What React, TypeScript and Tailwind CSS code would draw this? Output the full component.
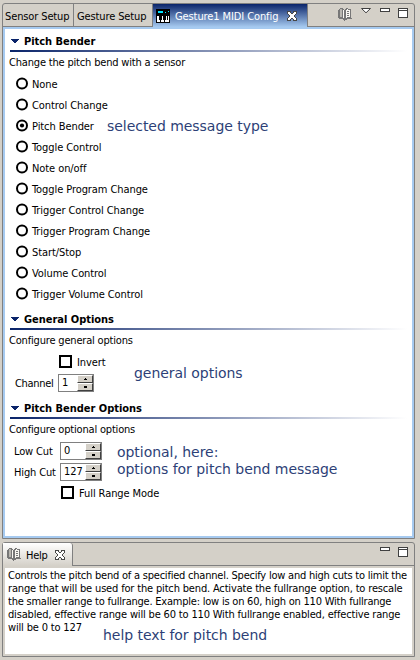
import type { ReactNode } from 'react';

const messageTypes = [
  'None',
  'Control Change',
  'Pitch Bender',
  'Toggle Control',
  'Note on/off',
  'Toggle Program Change',
  'Trigger Control Change',
  'Trigger Program Change',
  'Start/Stop',
  'Volume Control',
  'Trigger Volume Control',
];

function Radio({ label, checked }: { label: string; checked: boolean }) {
  return (
    <div className="flex h-[21px] items-center pl-[11px]">
      <svg width="12" height="13" viewBox="0 0 12 13" className="shrink-0">
        <circle cx="6" cy="6.5" r="5" fill="#fff" stroke="#000" strokeWidth="2" />
        {checked && <circle cx="6" cy="6.5" r="2.1" fill="#000" />}
      </svg>
      <span className="pt-px pl-[4px] tracking-[-0.08px]">{label}</span>
    </div>
  );
}

function Check({ label }: { label: string }) {
  return (
    <div className="flex h-[21px] items-center">
      <span className="size-[13px] border-2 border-black bg-white" />
      <span className="pt-px pl-[5px] tracking-[-0.08px]">{label}</span>
    </div>
  );
}

function Heading({ children }: { children: ReactNode }) {
  return (
    <div className="mx-[5px] flex h-[21px] flex-col">
      <div className="flex h-[19px] items-center pt-px pl-[1px]">
        <svg width="9" height="5" viewBox="0 0 9 5" shapeRendering="crispEdges">
          <path d="M0 0H8V1H7V2H6V3H5V4H3V3H2V2H1V1H0Z" fill="#0a246a" />
        </svg>
        <span className="pl-[4px] font-bold tracking-[-0.03px]">{children}</span>
      </div>
      <div className="h-[2px] bg-linear-to-r/srgb from-[#0a246a] to-white" />
    </div>
  );
}

function Description({ children }: { children: ReactNode }) {
  return <div className="pt-[4px] pl-[4px] tracking-[-0.18px]">{children}</div>;
}

function Spinner({ value }: { value: string }) {
  return (
    <div className="flex h-[18px] border border-[#808080] bg-white">
      <span className="flex-1 pl-[3px] leading-[15px]">{value}</span>
      <div className="flex w-[16px] flex-col">
        {['M0 2H1V1H2V0H3V1H4V2H5V3H0Z', 'M0 0H5V1H4V2H3V3H2V2H1V1H0Z'].map((d) => (
          <div
            key={d}
            className="flex h-[8px] items-center justify-center border border-t-white border-r-[#404040] border-b-[#404040] border-l-white bg-[#d4d0c8]"
          >
            <svg width="5" height="3" viewBox="-1 0 7 4" shapeRendering="crispEdges">
              <path d={d} />
            </svg>
          </div>
        ))}
      </div>
    </div>
  );
}

function Book() {
  return (
    <svg width="15" height="13" viewBox="0 0 15 13" shapeRendering="crispEdges" className="shrink-0">
      <path d="M1 1H2V0H5V1H6V2H7V1H8V0H10V1H13V10H14V11H9V12H7V13H6V12H5V11H1V10H0V2H1Z" fill="#777" />
      <path d="M2 1H4V9H2Z" fill="#b8b6b0" />
      <path d="M5 2H6V10H5ZM8 2H9V1H10V2H12V9H9V10H8Z" fill="#f8f7f2" />
      <path d="M9 3.5H11M9 5.5H11M9 7.5H11" stroke="#777" />
    </svg>
  );
}

function CloseIcon() {
  return (
    <svg width="10" height="10" viewBox="-0.5 -0.5 10 10" shapeRendering="crispEdges" className="shrink-0">
      <path
        d="M0 0H3V1L4 2H5L6 1V0H9V2L7 4V5L9 7V9H6V8L5 7H4L3 8V9H0V7L2 5V4L0 2Z"
        fill="#fff"
        stroke="#484848"
      />
    </svg>
  );
}

function Minimize() {
  return <span className="h-[4px] w-[10px] border border-[#404040] bg-white" />;
}

function Maximize() {
  return (
    <span className="flex h-[10px] w-[10px] flex-col border border-[#404040] bg-white">
      <span className="mt-px h-px bg-[#404040]" />
    </span>
  );
}

function Note({ className, children }: { className: string; children: ReactNode }) {
  return (
    <div
      className={`absolute font-['Verdana','DejaVu_Sans',sans-serif] text-[14px] leading-[17px] tracking-[-0.04px] whitespace-nowrap text-[#2d3f77] [font-stretch:normal] ${className}`}
    >
      {children}
    </div>
  );
}

export default function App() {
  return (
    <div className="relative h-[660px] w-[420px] overflow-hidden bg-[#d4d0c8] pt-[3px] pl-[2px] font-['Tahoma','DejaVu_Sans_Condensed','DejaVu_Sans',sans-serif] text-[11px] leading-[13px] whitespace-nowrap text-black [font-stretch:condensed]">
      <section className="flex h-[536px] w-[413px] flex-col rounded-t-[3px] border border-[#808080]">
        <header className="flex h-[23px] shrink-0">
          <div className="flex w-[71px] items-center border-r border-b border-[#808080] pt-[2px] pl-[2px] tracking-[-0.12px]">Sensor Setup</div>
          <div className="flex w-[78px] items-center border-b border-[#808080] pt-[2px] pl-[3px] tracking-[-0.12px]">Gesture Setup</div>
          <div className="flex w-[156px] items-center border-x border-[#808080] bg-linear-to-b/srgb from-[#0a246a] to-[#a6caf0] pl-[3px] text-white">
            <svg width="14" height="14" viewBox="0 0 14 14" shapeRendering="crispEdges" className="shrink-0">
              <path d="M0 0H14V14H0Z" />
              <path d="M2 2H7V4H2ZM12 2H13V3H12ZM9 3H10V4H9Z" fill="#00e5ff" />
              <path d="M1 7H3V11H4V13H1ZM5 11H6V7H7V11H8V13H5ZM9 11H10V7H13V13H9Z" fill="#fff" />
              <path d="M11 7H12V11H11Z" />
            </svg>
            <span className="w-[117px] pt-px pl-[5px] tracking-[-0.1px]">Gesture1 MIDI Config</span>
            <CloseIcon />
          </div>
          <div className="flex flex-1 items-start border-b border-[#808080] pt-[4px] pl-[30px]">
            <Book />
            <svg width="10" height="6" viewBox="0 0 10 6" className="ml-[8px]">
              <path d="M.5 .5H9.5L5 4.8Z" fill="#fff" stroke="#404040" />
            </svg>
            <span className="ml-[9px] flex"><Minimize /></span>
            <span className="ml-[8px] flex"><Maximize /></span>
          </div>
        </header>
        <div className="flex-1 border-2 border-[#a6caf0] bg-white pt-[2px]">
          <Heading>Pitch Bender</Heading>
          <Description>Change the pitch bend with a sensor</Description>
          <div className="pt-[4px]">
            {messageTypes.map((label) => (
              <Radio key={label} label={label} checked={label === 'Pitch Bender'} />
            ))}
          </div>
          <div className="pt-[5px]"><Heading>General Options</Heading></div>
          <Description>Configure general options</Description>
          <div className="pt-[4px] pl-[54px]"><Check label="Invert" /></div>
          <div className="flex h-[21px] items-center pt-px pl-[10px]">
            <span className="w-[43px] tracking-[-0.3px]">Channel</span>
            <div className="w-[36px]"><Spinner value="1" /></div>
          </div>
          <div className="pt-[5px]"><Heading>Pitch Bender Options</Heading></div>
          <Description>Configure optional options</Description>
          <div className="pt-[4px]">
            {[['Low Cut', '0'], ['High Cut', '127']].map(([name, value]) => (
              <div key={name} className="flex h-[21px] items-center pt-px pl-[9px]">
                <span className="w-[46px] tracking-[-0.15px]">{name}</span>
                <div className="w-[42px]"><Spinner value={value} /></div>
              </div>
            ))}
          </div>
          <div className="pl-[56px]"><Check label="Full Range Mode" /></div>
        </div>
      </section>

      <section className="mt-[3px] flex h-[115px] w-[413px] flex-col rounded-t-[3px] border border-[#808080]">
        <header className="flex h-[23px] shrink-0">
          <div className="flex w-[70px] items-center rounded-tr-[3px] border-r border-[#808080] bg-linear-to-b/srgb from-white to-[#d4d0c8] pl-[4px]">
            <Book />
            <span className="w-[33px] pt-[2px] pl-[4px] tracking-[-0.3px]">Help</span>
            <CloseIcon />
          </div>
          <div className="flex flex-1 items-start border-b border-[#808080] pt-[4px] pl-[307px]">
            <Minimize />
            <span className="ml-[8px] flex"><Maximize /></span>
          </div>
        </header>
        <div className="mx-[2px] mt-[2px] mb-[2px] flex-1 bg-white pt-px pl-[3px] tracking-[-0.165px]">
          <p className="tracking-[-0.22px]">Controls the pitch bend of a specified channel. Specify low and high cuts to limit the</p>
          <p>range that will be used for the pitch bend. Activate the fullrange option, to rescale</p>
          <p className="tracking-[-0.22px]">the smaller range to fullrange. Example: low is on 60, high on 110 With fullrange</p>
          <p>disabled, effective range will be 60 to 110 With fullrange enabled, effective range</p>
          <p>will be 0 to 127</p>
        </div>
      </section>

      <Note className="top-[118px] left-[107px]">selected message type</Note>
      <Note className="top-[365px] left-[134px]">general options</Note>
      <Note className="top-[444px] left-[117px]">optional, here:<br />options for pitch bend message</Note>
      <Note className="top-[627px] left-[103px]">help text for pitch bend</Note>
    </div>
  );
}
